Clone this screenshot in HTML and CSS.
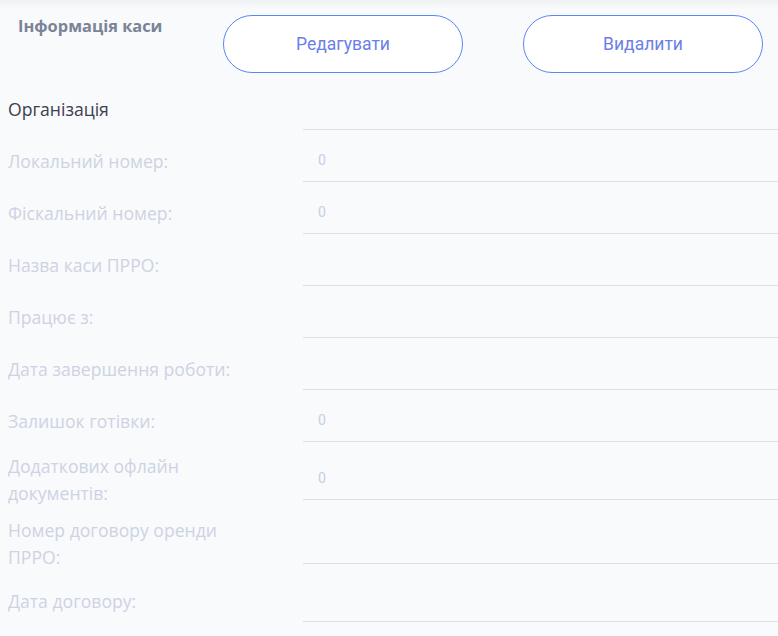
FILE: index.html
```html
<!DOCTYPE html>
<html lang="uk">

<head>
    <meta charset="UTF-8">
    <meta name="viewport" content="width=device-width, initial-scale=1.0">
    <title>Інформація каси</title>
    <link rel="stylesheet" href="styles.css">
</head>

<body>
    <div class="cashbox">
        <div class="cashbox-header">
            <h2 class="cashbox-title">Інформація каси</h2>
            <div class="cashbox-actions">
                <button class="btn-outline">Редагувати</button>
                <button class="btn-outline">Видалити</button>
            </div>
        </div>

        <div class="info-list">
            <div class="info-row">
                <div class="info-label info-label--dark">Організація</div>
                <div class="info-field"><span class="info-value"></span></div>
            </div>
            <div class="info-row">
                <div class="info-label">Локальний номер:</div>
                <div class="info-field"><span class="info-value">0</span></div>
            </div>
            <div class="info-row">
                <div class="info-label">Фіскальний номер:</div>
                <div class="info-field"><span class="info-value">0</span></div>
            </div>
            <div class="info-row">
                <div class="info-label">Назва каси ПРРО:</div>
                <div class="info-field"><span class="info-value"></span></div>
            </div>
            <div class="info-row">
                <div class="info-label">Працює з:</div>
                <div class="info-field"><span class="info-value"></span></div>
            </div>
            <div class="info-row">
                <div class="info-label">Дата завершення роботи:</div>
                <div class="info-field"><span class="info-value"></span></div>
            </div>
            <div class="info-row">
                <div class="info-label">Залишок готівки:</div>
                <div class="info-field"><span class="info-value">0</span></div>
            </div>
            <div class="info-row info-row--tall">
                <div class="info-label">Додаткових офлайн документів:</div>
                <div class="info-field"><span class="info-value">0</span></div>
            </div>
            <div class="info-row info-row--taller">
                <div class="info-label">Номер договору оренди ПРРО:</div>
                <div class="info-field"><span class="info-value"></span></div>
            </div>
            <div class="info-row info-row--tall">
                <div class="info-label">Дата договору:</div>
                <div class="info-field"><span class="info-value"></span></div>
            </div>
        </div>
    </div>
</body>

</html>
```

FILE: styles.css
```css
body {
    margin: 0;
    background-color: #f9fafc;
    font-family: "Open Sans", "Noto Sans", sans-serif;
    overflow: hidden;
}

.cashbox {
    min-height: 100vh;
    box-shadow: inset 0 8px 8px -6px rgba(0, 0, 0, 0.06);
}

.cashbox-header {
    display: flex;
    padding: 15px 15px 0 18px;
}

.cashbox-title {
    flex: 1;
    margin: 0;
    font-size: 16.4px;
    line-height: 22px;
    font-weight: 700;
    color: #7b8396;
}

.cashbox-actions {
    display: flex;
    gap: 60px;
}

.btn-outline {
    width: 240px;
    height: 58px;
    border: 1px solid #5c86f4;
    border-radius: 29px;
    background-color: #fff;
    color: #6a80e8;
    font-family: "Roboto", sans-serif;
    font-size: 17.5px;
    cursor: pointer;
}

.info-list {
    padding: 5px 0 0 8px;
}

.info-row {
    display: flex;
    align-items: flex-end;
    height: 52px;
}

.info-row--tall {
    height: 58px;
}

.info-row--taller {
    height: 64px;
}

/* центр тексту ~20px над лінією */
.info-label {
    width: 295px;
    height: 41px;
    padding-right: 40px;
    box-sizing: border-box;
    display: flex;
    align-items: center;
    font-size: 17.6px;
    line-height: 27px;
    color: #cdd3e3;
}

.info-label--dark {
    color: #3b4050;
}

.info-field {
    flex: 1;
    height: 100%;
    display: flex;
    align-items: flex-end;
    border-bottom: 1px solid #dcdfe6;
    box-sizing: border-box;
}

.info-value {
    height: 41px;
    line-height: 41px;
    padding-left: 15px;
    font-family: "Roboto", sans-serif;
    font-size: 14px;
    color: #c5cfe6;
}
```
